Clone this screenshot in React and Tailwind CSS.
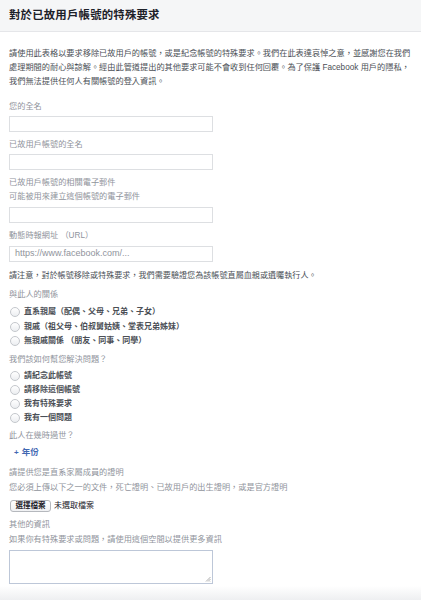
import React from 'react';

const font = "font-['Liberation_Sans','Noto_Sans_CJK_TC',sans-serif]";

// gray field label
function Label({ children, className = '' }) {
  return <div className={`text-[8.2px] leading-[14px] text-[#90949c] whitespace-nowrap ${className}`}>{children}</div>;
}

function TextInput({ placeholder, className = '' }) {
  return (
    <div className={`w-[204px] h-[16px] border border-[#dddfe2] bg-white flex items-center pl-[5px] ${className}`}>
      {placeholder && <span className="text-[9px] text-[#90949c]">{placeholder}</span>}
    </div>
  );
}

function Radio({ children, tall }) {
  return (
    <div className={`flex items-center ${tall ? 'h-[14.5px]' : 'h-[14px]'}`}>
      <span className="ml-[10px] w-[10px] h-[10px] rounded-full border border-[#c4c7cc] bg-gradient-to-b from-white to-[#eceef1] shrink-0" />
      <span className="ml-[4px] text-[8px] font-semibold text-[#4b4f56] leading-[14px] whitespace-nowrap">{children}</span>
    </div>
  );
}

export default function App() {
  const relations = ['直系親屬（配偶、父母、兄弟、子女）', '親戚（祖父母、伯叔舅姑姨、堂表兄弟姊妹）', '無親戚關係 （朋友、同事、同學）'];
  const helps = ['請紀念此帳號', '請移除這個帳號', '我有特殊要求', '我有一個問題'];

  return (
    <div className={`w-[421px] h-[600px] bg-white overflow-hidden flex flex-col ${font}`}>
      {/* header */}
      <div className="h-[32px] bg-[#f5f6f7] border-b border-[#e5e6e9] flex items-center px-[9px] shrink-0">
        <h1 className="text-[11.4px] font-bold text-[#1d2129] tracking-[0.2px]">對於已故用戶帳號的特殊要求</h1>
      </div>

      <div className="px-[9px] flex-1">
        <p className="mt-[15px] text-[8.2px] leading-[14px] text-[#4b4f56] whitespace-nowrap">
          請使用此表格以要求移除已故用戶的帳號，或是紀念帳號的特殊要求。我們在此表達哀悼之意，並感謝您在我們
          <br />
          處理期間的耐心與諒解。經由此管道提出的其他要求可能不會收到任何回覆。為了保護 Facebook 用戶的隱私，
          <br />
          我們無法提供任何人有關帳號的登入資訊。
        </p>

        <Label className="mt-[11px]">您的全名</Label>
        <TextInput className="mt-[2px]" />

        <Label className="mt-[6px]">已故用戶帳號的全名</Label>
        <TextInput className="mt-[2px]" />

        <Label className="mt-[6px]">已故用戶帳號的相關電子郵件</Label>
        <Label>可能被用來建立這個帳號的電子郵件</Label>
        <TextInput className="mt-[3px]" />

        <Label className="mt-[6px]">動態時報網址 （URL）</Label>
        <TextInput className="mt-[3px]" placeholder="https://www.facebook.com/..." />

        <p className="mt-[7px] text-[8.1px] leading-[14px] text-[#4b4f56] whitespace-nowrap">
          請注意，對於帳號移除或特殊要求，我們需要驗證您為該帳號直屬血親或遺囑執行人。
        </p>

        <Label className="mt-[5px]">與此人的關係</Label>
        <div className="mt-[3px] -ml-[9px]">
          {relations.map((r) => (
            <Radio key={r} tall>{r}</Radio>
          ))}
        </div>

        <Label className="mt-[4px]">我們該如何幫您解決問題？</Label>
        <div className="mt-[2px] -ml-[9px]">
          {helps.map((r) => (
            <Radio key={r}>{r}</Radio>
          ))}
        </div>

        <Label className="mt-[4px]">此人在幾時過世？</Label>
        <div className="mt-[3px] h-[14px] flex items-center pl-[5px] text-[#4267b2] text-[8.5px] font-semibold">
          <span className="text-[8px]">+</span>
          <span className="ml-[3px]">年份</span>
        </div>

        <Label className="mt-[6px]">請提供您是直系家屬成員的證明</Label>
        <Label className="mt-[1px]">您必須上傳以下之一的文件，死亡證明、已故用戶的出生證明，或是官方證明</Label>
        <div className="mt-[5px] flex items-center h-[12px]">
          <span className="ml-[1px] h-[12px] w-[41px] rounded-[3px] border border-[#b5b8bd] bg-gradient-to-b from-white to-[#f0f1f3] flex items-center justify-center text-[7.5px] font-bold text-[#1d2129]">
            選擇檔案
          </span>
          <span className="ml-[3px] text-[8px] text-[#1d2129]">未選取檔案</span>
        </div>

        <Label className="mt-[6px]">其他的資訊</Label>
        <Label className="mt-[1px]">如果你有特殊要求或問題，請使用這個空間以提供更多資訊</Label>
        <div className="relative mt-[3px] w-[204px] h-[34px] border border-[#bdc7d8] bg-white">
          <svg className="absolute right-[1px] bottom-[1px]" width="6" height="6" viewBox="0 0 6 6">
            <path d="M5.5 1 L1 5.5 M5.5 3 L3 5.5 M5.5 5 L5 5.5" stroke="#9a9a9a" strokeWidth="0.8" />
          </svg>
        </div>
      </div>

      <div className="h-[14px] shrink-0 bg-gradient-to-b from-white to-[#eeeff1]" />
    </div>
  );
}
